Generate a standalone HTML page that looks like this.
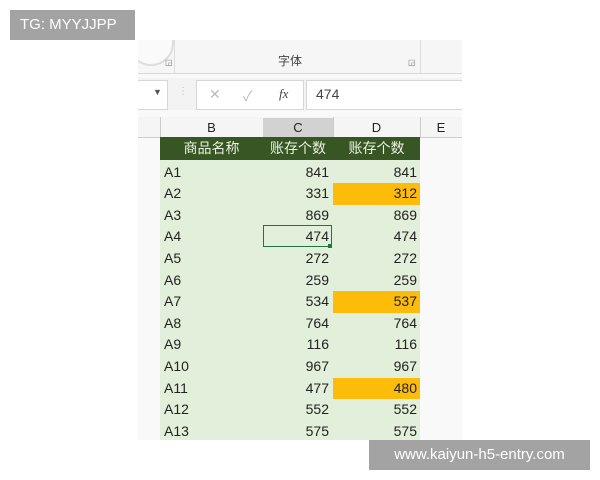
<!DOCTYPE html><html><head><meta charset="utf-8"><style>
body{margin:0;width:600px;height:480px;background:#fff;position:relative;overflow:hidden;font-family:"Liberation Sans","Noto Sans CJK SC",sans-serif}
.a{position:absolute}
.shot{left:138px;top:40px;width:324px;height:400px;background:#f9f9f9;overflow:hidden}
.row{position:absolute;left:22px;width:260px;height:21.6px;font-size:14px;color:#222;line-height:21.6px}
.row span{position:absolute;top:0;height:21.6px}
.b{left:4px}.c{left:103px;width:66px;text-align:right}
.hl{background:#fdbb0a}
.lab{background:#a3a3a3;color:#fff;font-size:15px}
</style></head><body>
<div class="a shot">
 <div class="a" style="left:0;top:0;width:324px;height:33px;background:#f6f6f6"></div>
 <div class="a" style="left:-10px;top:-20px;width:42px;height:42px;border:2px solid #ddd;border-radius:50%;background:#fafafa"></div>
 <div class="a" style="left:36px;top:0;width:1px;height:33px;background:#ddd"></div>
 <div class="a" style="left:282px;top:0;width:1px;height:33px;background:#ddd"></div>
 <div class="a" style="left:140px;top:12px;font-size:12px;color:#444">字体</div>
 <div class="a" style="left:27px;top:18px;font-size:8px;color:#777">◲</div>
 <div class="a" style="left:270px;top:18px;font-size:8px;color:#777">◲</div>
 <div class="a" style="left:0;top:33px;width:324px;height:1px;background:#d8d8d8"></div>
 <div class="a" style="left:0;top:38px;width:324px;height:32px;background:#f3f3f3"></div>
 <div class="a" style="left:-2px;top:40px;width:30px;height:28px;background:#fff;border:1px solid #d6d6d6"></div>
 <div class="a" style="left:15px;top:47px;font-size:9px;color:#555">▼</div>
 <div class="a" style="left:40px;top:46px;font-size:10px;color:#bbb">⋮</div>
 <div class="a" style="left:58px;top:40px;width:106px;height:28px;background:#fff;border:1px solid #d6d6d6"></div>
 <div class="a" style="left:71px;top:46px;font-size:14px;color:#bbb">✕</div>
 <div class="a" style="left:105px;top:46px;font-size:14px;color:#bbb">✓</div>
 <div class="a" style="left:141px;top:46px;font-size:13px;color:#444;font-style:italic;font-family:'Liberation Serif',serif">fx</div>
 <div class="a" style="left:168px;top:40px;width:160px;height:28px;background:#fff;border:1px solid #d6d6d6"></div>
 <div class="a" style="left:178px;top:46px;font-size:14px;color:#444">474</div>
 <div class="a" style="left:0;top:77px;width:324px;height:20px;background:#f5f5f5;border-bottom:1px solid #ccc"></div>
 <div class="a" style="left:125px;top:78px;width:70px;height:19px;background:#d2d2d2;border-bottom:2px solid #217346"></div>
 <div class="a" style="left:22px;top:77px;width:1px;height:20px;background:#ccc"></div>
 <div class="a" style="left:195px;top:77px;width:1px;height:20px;background:#ccc"></div>
 <div class="a" style="left:282px;top:77px;width:1px;height:20px;background:#ccc"></div>
 <div class="a" style="left:22px;top:80px;width:103px;text-align:center;font-size:13px;color:#222">B</div>
 <div class="a" style="left:125px;top:80px;width:70px;text-align:center;font-size:13px;color:#222">C</div>
 <div class="a" style="left:195px;top:80px;width:87px;text-align:center;font-size:13px;color:#222">D</div>
 <div class="a" style="left:282px;top:80px;width:42px;text-align:center;font-size:13px;color:#222">E</div>
 <div class="a" style="left:22px;top:97px;width:260px;height:23px;background:#375623;color:#eaf2e3;font-size:14px;line-height:23px">
  <span class="a" style="left:0;width:103px;text-align:center">商品名称</span>
  <span class="a" style="left:103px;width:70px;text-align:center">账存个数</span>
  <span class="a" style="left:173px;width:87px;text-align:center">账存个数</span></div>
 <div class="a" style="left:22px;top:120px;width:260px;height:280px;background:#e2efda"></div>
 <div class="a" style="left:125px;top:185px;width:67px;height:20px;border:1px solid #217346"></div>
 <div class="a" style="left:190px;top:204px;width:4px;height:4px;background:#217346"></div>
 <div id="rows"></div>
</div>
<div class="a lab" style="left:10px;top:10px;width:125px;height:30px;line-height:30px;padding-left:10px;box-sizing:border-box">TG: MYYJJPP</div>
<div class="a lab" style="left:369px;top:440px;width:221px;height:30px;line-height:30px;text-align:center">www.kaiyun-h5-entry.com</div>
<script>
var d=[["A1",841,841],["A2",331,312,1],["A3",869,869],["A4",474,474],["A5",272,272],["A6",259,259],["A7",534,537,1],["A8",764,764],["A9",116,116],["A10",967,967],["A11",477,480,1],["A12",552,552],["A13",575,575]],h="";
d.forEach(function(r,i){h+='<div class="row" style="top:'+(121.5+i*21.6)+'px"><span class="b">'+r[0]+'</span><span class="c">'+r[1]+'</span><span class="'+(r[3]?'hl':'')+'" style="padding-right:3px;left:173px;box-sizing:border-box;width:87px;text-align:right">'+r[2]+'</span></div>';});
document.getElementById("rows").innerHTML=h;
</script>
</body></html>
